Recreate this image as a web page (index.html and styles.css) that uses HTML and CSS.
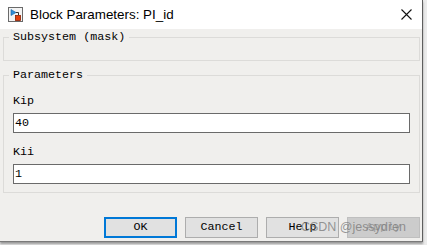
FILE: index.html
```html
<!DOCTYPE html>
<html>
<head>
<meta charset="utf-8">
<link rel="stylesheet" href="styles.css">
</head>
<body>
<div class="window">
  <div class="titlebar">
    <svg class="app-icon" width="15" height="15" viewBox="0 0 15 15">
      <rect x="0.5" y="0.5" width="14" height="14" fill="#f4f4f4" stroke="#6a6a6a"/>
      <polygon points="3,2.5 3,8.5 8,5.5" fill="#2f8fd8" stroke="#1a5f9a" stroke-width="0.6"/>
      <path d="M8 5.5 H10.5 V8" fill="none" stroke="#333" stroke-width="1"/>
      <rect x="7.5" y="8.5" width="5" height="5" fill="#e2400e" stroke="#8a2000" stroke-width="0.8"/>
    </svg>
    <span class="title">Block Parameters: PI_id</span>
    <svg class="close" width="11" height="11" viewBox="0 0 11 11">
      <path d="M0.5 0.5 L10.5 10.5 M10.5 0.5 L0.5 10.5" stroke="#111" stroke-width="1.1" fill="none"/>
    </svg>
  </div>
  <div class="dialog">
    <fieldset class="group group-mask">
      <legend class="legend">Subsystem (mask)</legend>
      <div class="mask-body"></div>
    </fieldset>
    <fieldset class="group group-params">
      <legend class="legend">Parameters</legend>
      <div class="param">
        <div class="label">Kip</div>
        <div class="field">40</div>
      </div>
      <div class="param">
        <div class="label">Kii</div>
        <div class="field">1</div>
      </div>
    </fieldset>
    <div class="buttons">
      <div class="btn btn-default">OK</div>
      <div class="btn">Cancel</div>
      <div class="btn">Help</div>
      <div class="btn btn-disabled">Apply</div>
    </div>
    <div class="watermark">CSDN @jessydren</div>
  </div>
</div>
</body>
</html>
```
FILE: styles.css
```css
html, body {
  margin: 0;
  padding: 0;
}
body {
  width: 427px;
  height: 245px;
  overflow: hidden;
  background: #ebebeb;
  font-family: "Liberation Mono", "Courier New", monospace;
  font-size: 11.7px;
  color: #000;
}
.window {
  width: 422px;
  height: 241px;
  border-right: 1px solid #5e5e5e;
  border-bottom: 1px solid #7a7a7a;
  box-shadow: 0 2px 2px rgba(0,0,0,0.35);
  background: #f0efed;
}
.titlebar {
  height: 29px;
  background: #ffffff;
  display: flex;
  align-items: center;
  padding-left: 8px;
  box-sizing: border-box;
}
.app-icon {
  flex: none;
  margin-top: -1px;
}
.title {
  font-family: "Liberation Sans", Arial, sans-serif;
  font-size: 13.4px;
  margin-left: 7px;
  color: #000;
  flex: 1;
  margin-top: -1px;
}
.close {
  flex: none;
  margin-right: 10px;
  margin-top: -1px;
}
.dialog {
  position: relative;
  padding: 2px 2px 0 3px;
}
.group {
  margin: 0;
  border: 1px solid #dcdbd9;
  padding: 0 9px 0 9px;
  min-width: 0;
}
.legend {
  padding: 0 4px;
  margin-left: -4px;
  line-height: 12px;
  height: 12px;
}
.mask-body {
  height: 17px;
}
.group-params {
  margin-top: 8px;
  padding-top: 14px;
  padding-bottom: 8px;
}
.param {
  display: flex;
  flex-direction: column;
  gap: 6px;
}
.param + .param {
  margin-top: 13px;
}
.label {
  line-height: 12px;
  height: 12px;
}
.field {
  height: 20px;
  box-sizing: border-box;
  border: 1px solid #6a6a6a;
  background: #fff;
  line-height: 18px;
  padding-left: 1px;
}
.buttons {
  display: flex;
  justify-content: flex-end;
  gap: 8px;
  margin-top: 24px;
}
.btn {
  width: 73px;
  height: 21px;
  box-sizing: border-box;
  border: 1px solid #adadad;
  background: #e1e1e1;
  text-align: center;
  line-height: 19px;
}
.btn-default {
  border: 2px solid #0078d7;
  line-height: 17px;
}
.btn-disabled {
  color: #a0a0a0;
  background: #cccccc;
  border-color: #bfbfbf;
}
.watermark {
  position: absolute;
  right: 16px;
  bottom: 4px;
  font-family: "Liberation Sans", Arial, sans-serif;
  font-size: 12.5px;
  color: rgba(120,120,120,0.75);
  line-height: 14px;
}
```
